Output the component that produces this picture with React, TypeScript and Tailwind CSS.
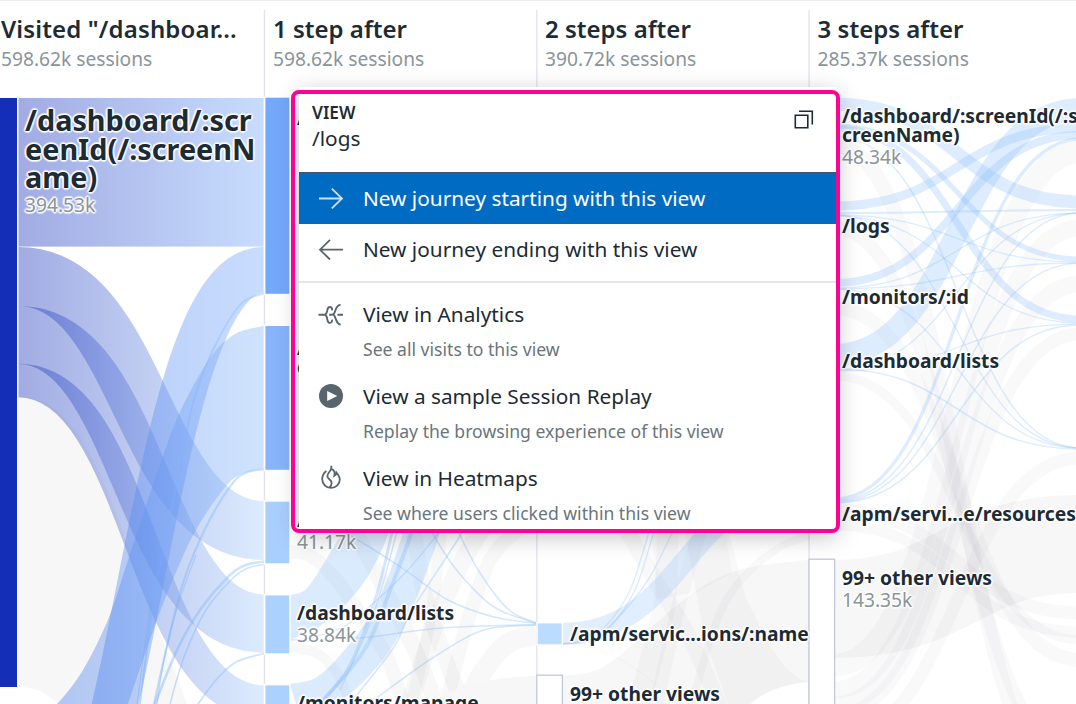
import React from "react";

type Pt = [number, number];

/** Horizontal sankey curve between two column edges. */
const link = (x0: number, y0: number, x1: number, y1: number) => {
  const m = (x0 + x1) / 2;
  return `M${x0} ${y0}C${m} ${y0} ${m} ${y1} ${x1} ${y1}`;
};

/** Smooth curve through a list of points. */
const smooth = (p: Pt[], start = "M") => {
  let d = `${start}${p[0][0]} ${p[0][1]}`;
  for (let i = 0; i < p.length - 1; i++) {
    const a = p[i - 1] ?? p[i];
    const b = p[i];
    const c = p[i + 1];
    const e = p[i + 2] ?? c;
    d += `C${b[0] + (c[0] - a[0]) / 6} ${b[1] + (c[1] - a[1]) / 6} ${c[0] - (e[0] - b[0]) / 6} ${c[1] - (e[1] - b[1]) / 6} ${c[0]} ${c[1]}`;
  }
  return d;
};

const area = (top: Pt[], bottom: Pt[]) => smooth(top) + smooth([...bottom].reverse(), "L") + "Z";

type Flow = [start: number, end: number, width: number];
type Curve = [width: number, points: Pt[]];

const blue3: Flow[] = [
  [104, 202, 13],
  [206, 128, 9],
  [283, 135, 8],
  [355, 109, 22],
  [126, 259, 5],
  [128, 319, 7],
  [213, 210, 2],
  [215, 262, 1.3],
  [136, 448, 1.5],
  [215, 448, 1.3],
  [289, 448, 1.3],
  [369, 449, 1.6],
  [216, 323, 1.3],
  [288, 213, 1.3],
  [289, 263, 1.3],
  [370, 213, 1.3],
  [371, 324, 1.3],
  [499, 139, 3.4],
  [501, 213, 1.5],
  [502, 263, 1.5],
  [503, 325, 1.5],
];

const grey3: Flow[] = [
  [145, 800, 15],
  [228, 760, 13],
  [308, 660, 14],
  [376, 640, 9],
  [665, 152, 22],
  [690, 228, 17],
  [705, 284, 17],
  [715, 334, 13],
  [740, 458, 13],
  [510, 613, 13],
  [525, 632, 11],
];

const blue1: Curve[] = [
  [1.5, [[330, 525], [358, 540], [405, 570], [448, 600], [494, 617], [537, 623.5]]],
  [1.5, [[428, 520], [434, 536], [459, 573], [494, 607], [537, 623.5]]],
  [1.5, [[455, 520], [459, 533], [480, 573], [509, 610], [537, 623]]],
  [1.5, [[290, 640], [359, 638], [441, 628], [537, 624.5]]],
  [1.5, [[370, 704], [378, 697], [434, 657], [484, 630], [537, 625]]],
  [1.5, [[466, 520], [460, 536], [412, 610], [394, 647], [355, 697], [345, 706]]],
  [1.3, [[450, 520], [437, 535], [405, 573], [362, 613], [337, 630], [300, 640]]],
  [4, [[415, 520], [410, 537], [394, 580], [366, 647], [326, 697], [318, 704]]],
  [3, [[395, 520], [391, 537], [376, 597], [351, 663], [330, 693], [318, 704]]],
  [1.5, [[400, 520], [396, 535], [382, 587], [366, 633], [340, 690]]],
];

const grey1: Curve[] = [
  [14, [[289, 552], [309, 555], [334, 577], [362, 617], [387, 657], [405, 710]]],
  [10, [[289, 647], [316, 653], [337, 673], [353, 710]]],
  [16, [[352, 525], [385, 590], [415, 650], [438, 710]]],
  [16, [[413, 525], [425, 597], [447, 663], [465, 710]]],
  [18, [[408, 710], [433, 630], [458, 570], [484, 525]]],
  [14, [[445, 710], [465, 630], [490, 560], [520, 528]]],
  [20, [[537, 635], [508, 643], [484, 670], [462, 710]]],
  [12, [[442, 525], [430, 620], [410, 710]]],
];

const grey2: Curve[] = [
  [16, [[624, 525], [655, 580], [691, 640], [721, 710]]],
  [22, [[668, 525], [665, 600], [651, 660], [637, 710]]],
  [14, [[702, 525], [680, 600], [655, 710]]],
  [8, [[809, 536], [780, 547], [741, 580], [716, 623], [690, 710]]],
  [1, [[562, 644], [600, 650], [640, 672], [680, 706]]],
];

const Bundle = ({ x0, x1, items, color, opacity }: { x0: number; x1: number; items: Flow[]; color: string; opacity: number }) => (
  <g fill="none" stroke={color} strokeOpacity={opacity}>
    {items.map(([a, b, w], i) => (
      <path key={i} d={link(x0, a, x1, b)} strokeWidth={w} />
    ))}
  </g>
);

const Curves = ({ items, color, opacity }: { items: Curve[]; color: string; opacity: number }) => (
  <g fill="none" stroke={color} strokeOpacity={opacity}>
    {items.map(([w, pts], i) => (
      <path key={i} d={smooth(pts)} strokeWidth={w} />
    ))}
  </g>
);

const Grad = ({ id, from, to, x0, x1 }: { id: string; from: string; to: string; x0: number; x1: number }) => (
  <linearGradient id={id} gradientUnits="userSpaceOnUse" x1={x0} x2={x1} y1="0" y2="0">
    <stop offset="0" stopColor={from} />
    <stop offset="1" stopColor={to} />
  </linearGradient>
);

const Flows = () => (
  <svg className="absolute inset-0" width="1076" height="704" viewBox="0 0 1076 704">
    <defs>
      <Grad id="n1" from="#142eb8" to="#74a8fb" x0={18} x1={264} />
      <Grad id="n3" from="#142eb8" to="#a8cefe" x0={18} x1={264} />
      <Grad id="r1" from="#3c70e8" to="#74a8fb" x0={18} x1={264} />
      <Grad id="r2" from="#3c70e8" to="#87b7fb" x0={18} x1={264} />
      <Grad id="r3" from="#6ba0f8" to="#8fc4fc" x0={100} x1={264} />
    </defs>

    {/* column rules */}
    <g fill="#e1e2ec">
      <rect x="263.8" y="10" width="1.3" height="694" />
      <rect x="536.2" y="10" width="1.3" height="694" />
      <rect x="808.4" y="10" width="1.3" height="694" />
    </g>

    {/* first column */}
    <path
      d="M18 397C88 397 112 510 155 620C166 650 178 680 190 712L64 712C55 697 40 687 18 687Z"
      fill="#f7f7f7"
    />
    <g fill="none" strokeOpacity="0.4">
      <rect x="18.5" y="98" width="245" height="148.6" fill="url(#n1)" fillOpacity="0.4" />
      <path d={link(18.5, 276.5, 263.5, 530.5)} stroke="url(#n3)" strokeWidth="59" />
      <path d={link(18.5, 335, 263.5, 623.5)} stroke="url(#n3)" strokeWidth="58" />
      <path d={link(18.5, 380.5, 263.5, 702)} stroke="url(#n3)" strokeWidth="33.5" />
      <path d={link(18.5, 890, 263.5, 270)} stroke="url(#r1)" strokeWidth="46" />
      <path
        d={area(
          [[40, 716], [57, 704], [83, 670], [109, 617], [128, 560], [158, 470], [180, 412], [210, 358], [235, 334], [263.5, 326]],
          [[124, 716], [128, 704], [157, 620], [180, 563], [200, 523], [228, 484], [245, 473], [263.5, 469]],
        )}
        fill="url(#r2)"
        fillOpacity="0.4"
      />
      <g stroke="url(#r3)" strokeOpacity="0.42">
        <path d={smooth([[140, 704], [153, 603], [163, 553], [180, 470], [193, 403], [213, 350], [240, 305], [264, 293.5]])} strokeWidth="1.8" />
        <path d={smooth([[154, 704], [170, 633], [184, 580], [206, 527], [232, 484], [248, 472], [264, 469.5]])} strokeWidth="2.2" />
        <path d={smooth([[137, 704], [151, 603], [161, 553], [178, 475]])} strokeWidth="1.2" />
        <path d={smooth([[155, 704], [177, 650], [200, 610], [230, 575], [246, 565], [264, 561.5]])} strokeWidth="2.6" />
        <path d={smooth([[170, 704], [184, 657], [206, 610], [233, 578], [248, 568], [264, 564.3]])} strokeWidth="1.5" />
        <path d={smooth([[157, 704], [164, 660], [178, 605], [196, 555]])} strokeWidth="1.2" />
        <path d={smooth([[198, 704], [216, 680], [236, 662], [264, 653.5]])} strokeWidth="1.8" />
      </g>
    </g>

    {/* second column */}
    <Curves items={grey1} color="#555566" opacity={0.042} />
    <path d="M430 704C460 682 500 677 537 676V704Z" fill="#f7f7f7" />
    <path
      d={area(
        [[290, 595], [307, 588], [330, 553], [345, 525], [365, 470]],
        [[290, 640], [320, 626], [347, 603], [370, 573], [390, 530], [410, 470]],
      )}
      fill="#8ec1fb"
      fillOpacity="0.32"
    />
    <path
      d={area(
        [[290, 684], [317, 677], [347, 647], [377, 603], [403, 533], [420, 470]],
        [[300, 718], [335, 704], [363, 682], [390, 650], [413, 607], [440, 533], [458, 470]],
      )}
      fill="#8ec1fb"
      fillOpacity="0.32"
    />
    <Curves items={blue1} color="#8ec1fb" opacity={0.38} />

    {/* third column */}
    <path
      d={smooth([[562, 676], [597, 670], [630, 647], [663, 617], [697, 590], [730, 573], [763, 565], [808, 560]]) + "V682C785 684 765 692 750 704H562Z"}
      fill="#f7f7f7"
    />
    <Curves items={grey2} color="#555566" opacity={0.035} />
    <path d="M652 533L656 600L697 592L732 573L725 533Z" fill="#555566" fillOpacity="0.03" />
    <path d="M729 533C740 575 745 600 752 610C768 645 785 676 808 682C780 685 758 692 746 710H730L705 640L685 533Z" fill="#555566" fillOpacity="0.035" />
    <path d={link(562, 633.5, 809, 487)} fill="none" stroke="#8ec1fb" strokeOpacity="0.28" strokeWidth="21" />
    <g fill="none" stroke="#8ec1fb" strokeOpacity="0.3" strokeWidth="1.4">
      <path d={smooth([[562, 644], [584, 640], [605, 627], [630, 590], [648, 535], [650, 525]])} />
      <path d={smooth([[562, 644], [588, 640], [610, 627], [635, 590], [653, 535], [656, 525]])} />
      <path d={smooth([[562, 644], [590, 641], [616, 620], [648, 580], [671, 535], [675, 525]])} />
    </g>

    {/* fourth column */}
    <path d={link(834, 609, 1081, 544)} fill="none" stroke="#f7f7f7" strokeWidth="98" />
    <Bundle x0={834} x1={1081} items={grey3} color="#555566" opacity={0.037} />
    <Bundle x0={834} x1={1081} items={blue3} color="#8ec1fb" opacity={0.3} />

    {/* nodes */}
    <rect x="0" y="98" width="17" height="589" fill="#142eb8" />
    <g stroke="#fff" strokeWidth="1.4">
      <rect x="264.7" y="97" width="25.3" height="197.5" fill="#74a8fb" />
      <rect x="264.7" y="325.3" width="25.3" height="145.2" fill="#87b4fb" />
      <rect x="264.7" y="501" width="25.3" height="63" fill="#a9cffe" />
      <rect x="264.7" y="594.7" width="25.3" height="59.3" fill="#abd1fe" />
      <rect x="264.7" y="684.7" width="25.3" height="40" fill="#abd1fe" />
      <rect x="537" y="622.7" width="25.3" height="22.3" fill="#bbdbff" />
    </g>
    <g fill="#fff" stroke="#c3c7de" strokeWidth="1.3">
      <rect x="536.8" y="675.2" width="25.6" height="60" />
      <rect x="809" y="559.2" width="25.6" height="160" />
    </g>
  </svg>
);

const HALO =
  "[text-shadow:0_0_2px_#fff,1px_1px_1px_#fffc,-1px_-1px_1px_#fffc,1px_-1px_1px_#fffc,-1px_1px_1px_#fffc,2px_0_1px_#fffa,-2px_0_1px_#fffa,0_2px_1px_#fffa,0_-2px_1px_#fffa]";

const Label = ({ pos, name, count }: { pos: string; name?: string; count?: string }) => (
  <div className={`absolute whitespace-pre ${HALO} ${pos}`}>
    {name && <div className="text-[19.25px] leading-[19px] font-bold text-[#1c2b34]">{name}</div>}
    {count && <div className="text-[19.2px] leading-[25px] text-[#8a9499]">{count}</div>}
  </div>
);

const columns = [
  ['Visited "/dashboar...', "598.62k sessions", "w-[273px] pl-px", "tracking-[0.15px]"],
  ["1 step after", "598.62k sessions", "w-[272px]", ""],
  ["2 steps after", "390.72k sessions", "w-[272px]", ""],
  ["3 steps after", "285.37k sessions", "w-[259px] pl-[0.6px]", ""],
];

const iconProps = {
  width: 26,
  height: 26,
  viewBox: "0 0 26 26",
  fill: "none",
  stroke: "currentColor",
  strokeWidth: 1.8,
  className: "shrink-0",
};

const ArrowRight = () => (
  <svg {...iconProps}>
    <path d="M1 12.5H24M13.8 2.7L24 12.5L13.8 22.3" />
  </svg>
);
const ArrowLeft = () => (
  <svg {...iconProps}>
    <path d="M25 12.7H2M12 2.9L2 12.7L12 22.5" />
  </svg>
);
const AnalyticsIcon = () => (
  <svg {...iconProps} strokeWidth={1.9}>
    <path d="M0.5 12.7H6.5C8.6 12.7 8.9 10.3 9.3 8.2C9.7 5.8 10.8 5 12 5C13.9 5 14.3 6.8 14 8.4M7.2 12.9C9.2 14 8.9 16 9.5 18.2C9.9 20.1 10.9 20.9 12 20.9C13.5 20.9 14.3 19.3 14 17.6M22.6 2.9C18.2 2.9 18 7.6 16.7 10.3C16 12 15.2 12.7 14 12.7H11.2M15.6 12.7C18.1 14.5 17.5 21.9 22.6 22.7M19.5 12.7H25" />
  </svg>
);
const PlayIcon = () => (
  <svg {...iconProps}>
    <circle cx="13" cy="13" r="12" fill="currentColor" stroke="none" />
    <path d="M9.2 7.9V18.1L19.3 13Z" fill="#fff" stroke="none" />
  </svg>
);
const FlameIcon = () => (
  <svg {...iconProps}>
    <path d="M8.4 5.9C5.5 8 4.2 10.7 4.2 14C4.2 19 8 22.9 13 22.9C18 22.9 21.8 19 21.8 14.6C21.8 11.8 20.4 10 18.5 7.6C18.3 9.4 17.5 10.5 16.2 11C17.2 8 16.5 5.2 13.3 3.9V.7M13 3.6C13 6.3 9.4 8 9.4 11.2C9.4 14.1 13.6 14.6 13.6 18C13.6 20 12.8 21.5 11.3 22.6" />
  </svg>
);

const Entry = ({ icon, title, note }: { icon: React.ReactNode; title: string; note: string }) => (
  <div className="flex h-[81.8px] gap-[19px] pl-[19px]">
    <div className="pt-[10.5px] text-[#59656c]">{icon}</div>
    <div className="whitespace-nowrap">
      <div className="pt-[9.4px] text-[20.8px] leading-[28px] text-[#1c2b34]">{title}</div>
      <div className="pt-[8.6px] text-[17.6px] leading-[24px] text-[#69757c]">{note}</div>
    </div>
  </div>
);

const ViewMenu = () => (
  <>
    <div className="absolute top-[87px] left-[299px] h-[443px] w-[538px] bg-white shadow-[0_6px_22px_rgba(0,0,0,0.25)]">
      <div className="flex h-[85px] items-start justify-between pt-[16px] pr-[22px] pl-[13px]">
        <div className="text-[#1c2b34]">
          <div className="text-[17.3px] leading-[20px] font-semibold">VIEW</div>
          <div className="pt-px text-[20.8px] leading-[28px]">/logs</div>
        </div>
        <svg className="mt-[5px]" width="22" height="22" viewBox="0 0 22 22" fill="none" stroke="#1c2b34" strokeWidth="1.6">
          <path d="M2.3 7.3H14.8V19.8H2.3Z M6 3.2H19.3V16.5" />
        </svg>
      </div>
      <div className="flex h-[52px] items-center gap-[19px] border-t border-[#41566b] bg-[#006bc2] pl-[19px] text-[20.8px] whitespace-nowrap text-white">
        <span className="flex text-[#c9e0f5]"><ArrowRight /></span>
        New journey starting with this view
      </div>
      <div className="flex h-[52px] items-center gap-[19px] pl-[19px] text-[20.8px] whitespace-nowrap text-[#1c2b34]">
        <span className="flex text-[#59656c]"><ArrowLeft /></span>
        New journey ending with this view
      </div>
      <div className="mt-[5px] h-[2px] bg-[#e3e5ef]" />
      <div className="pt-[8px]">
        <Entry icon={<AnalyticsIcon />} title="View in Analytics" note="See all visits to this view" />
        <Entry icon={<PlayIcon />} title="View a sample Session Replay" note="Replay the browsing experience of this view" />
        <Entry icon={<FlameIcon />} title="View in Heatmaps" note="See where users clicked within this view" />
      </div>
    </div>
    <div className="absolute top-[90px] left-[291px] h-[443px] w-[549px] rounded-[8px] border-4 border-[#fc0394]" />
  </>
);

export default function App() {
  return (
    <div className="relative h-[704px] w-[1076px] overflow-hidden bg-white font-['Noto_Sans',sans-serif] text-[#1c2b34]">
      <Flows />
      <div className="relative flex h-[98px] border-t border-[#eceef6] whitespace-nowrap">
        {columns.map(([title, sub, width, tracking]) => (
          <div key={title} className={`shrink-0 pt-[12px] ${width}`}>
            <div className={`text-[24px] leading-[32px] font-semibold ${tracking}`}>{title}</div>
            <div className="text-[19.2px] leading-[28px] text-[#8a9499]">{sub}</div>
          </div>
        ))}
      </div>

      <div className={`absolute top-[106px] left-[25px] ${HALO}`}>
        <div className="text-[28.8px] leading-[28.7px] font-bold whitespace-pre">{"/dashboard/:scr\neenId(/:screenN\name)"}</div>
        <div className="text-[19.2px] leading-[25px] text-[#8a9499]">394.53k</div>
      </div>

      <Label pos="left-[297px] top-[108px]" name="/" />
      <Label pos="left-[297px] top-[338px]" name={"/\nc"} />
      <Label pos="left-[297px] top-[510px]" name="/" count="41.17k" />
      <Label pos="left-[297px] top-[603px]" name="/dashboard/lists" count="38.84k" />
      <Label pos="left-[297px] top-[693px]" name="/monitors/manage" />
      <Label pos="left-[570px] top-[624px]" name="/apm/servic...ions/:name" />
      <Label pos="left-[570px] top-[684px]" name="99+ other views" />
      <Label pos="left-[842px] top-[106px]" name={"/dashboard/:screenId(/:s\ncreenName)"} count="48.34k" />
      <Label pos="left-[842px] top-[216px]" name="/logs" />
      <Label pos="left-[842px] top-[287px]" name="/monitors/:id" />
      <Label pos="left-[842px] top-[351px]" name="/dashboard/lists" />
      <Label pos="left-[842px] top-[504px]" name="/apm/servi...e/resources" />
      <Label pos="left-[842px] top-[568px]" name="99+ other views" count="143.35k" />

      <ViewMenu />
    </div>
  );
}
